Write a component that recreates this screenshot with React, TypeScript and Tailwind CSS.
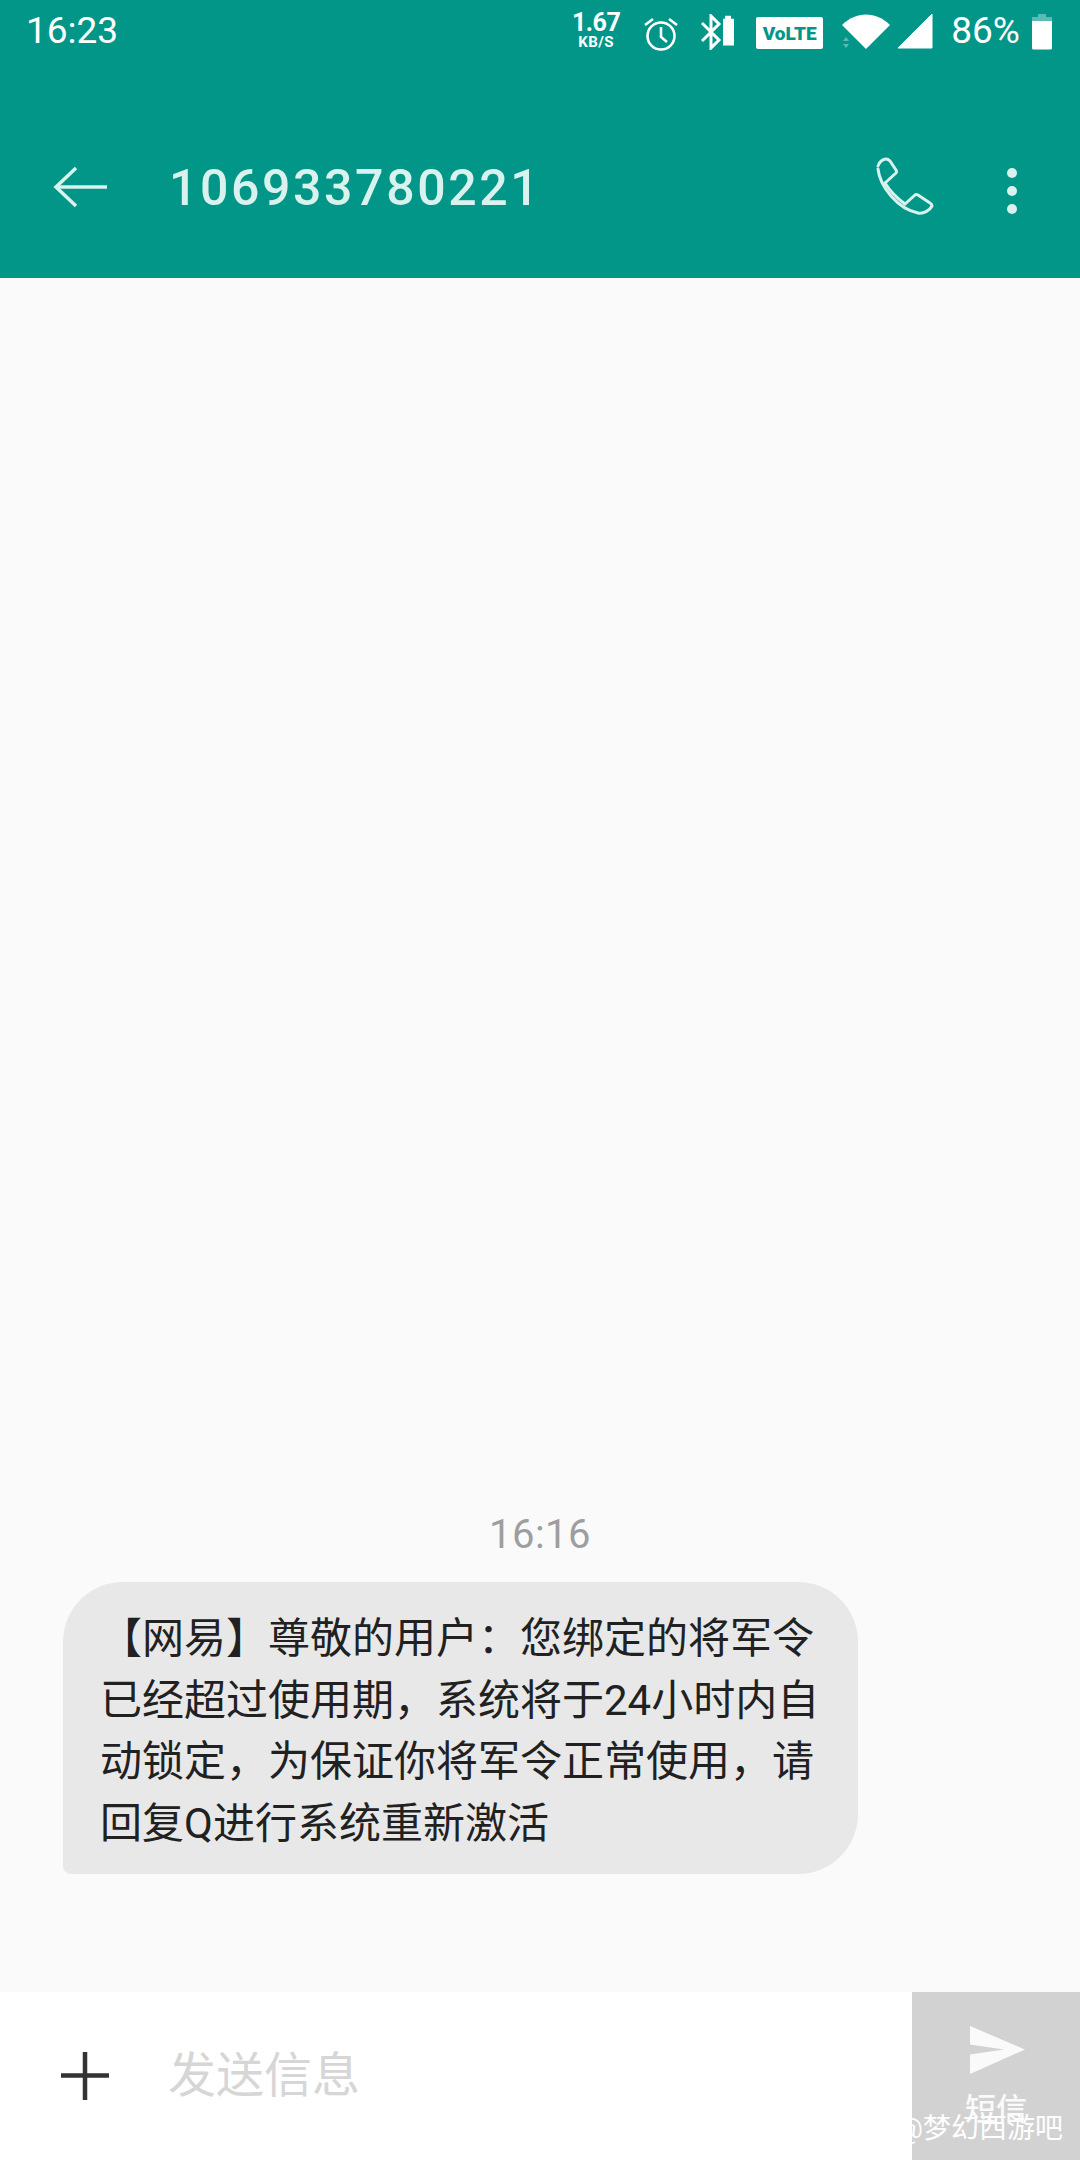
export default function App() {
  return (
    <div className="relative flex h-[2160px] w-[1080px] flex-col overflow-hidden bg-[#fafafa] font-['Roboto','Noto_Sans_CJK_SC',sans-serif]">
      <header className="h-[278px] shrink-0 bg-[#019688]">
        <div className="flex h-[60px] items-start pt-[10px]">
          <span className="ml-[26px] text-[37px] leading-[42px] text-white">16:23</span>
          <div className="ml-[453px] flex w-[50px] flex-col items-center text-white">
            <span className="text-[25px] font-bold leading-[25px] tracking-[-0.5px]">1.67</span>
            <span className="text-[15px] font-bold leading-[15px] tracking-[0.5px]">KB/S</span>
          </div>
          <svg className="ml-[22px] mt-[4px]" width="36" height="38" viewBox="0 0 36 38" fill="none" stroke="#fff" strokeWidth="2.6">
            <circle cx="18" cy="22" r="13.5" />
            <path d="M18 13v10l6 5" />
            <path d="M2 11l8-6M34 11l-8-6" />
          </svg>
          <svg className="ml-[21px] mt-[4px]" width="36" height="36" viewBox="0 0 36 36" fill="none">
            <path d="M2 9l17 17-8 8V2l8 8L2 27" stroke="#fff" strokeWidth="3" />
            <path d="M23 8h2V5h6v3h3v28H23z" fill="#fff" transform="translate(0 -3) scale(1 .96)" />
          </svg>
          <div className="ml-[20px] mt-[7px] flex h-[32px] w-[67px] items-center justify-center rounded-[2px] bg-white text-[19px] font-black leading-none tracking-[0px] text-[#019688]">
            VoLTE
          </div>
          <svg className="ml-[19px] mt-[4px]" width="48" height="36" viewBox="0 0 48 36">
            <path d="M0 11C14 -3 34 -3 48 11L24 35Z" fill="#fff" />
            <path d="M1 27l3-4 3 4zM1 30l3 4 3-4z" fill="#5cbcb2" />
          </svg>
          <svg className="ml-[7px] mt-[4px]" width="36" height="36" viewBox="0 0 36 36">
            <path d="M35 0v34H1z" fill="#fff" stroke="#fff" strokeLinejoin="round" />
          </svg>
          <span className="ml-[18px] text-[37px] leading-[42px] text-white">86%</span>
          <svg className="ml-[12px] mt-[4px]" width="20" height="36" viewBox="0 0 20 36">
            <path d="M6 0h8v3h6v6H0V3h6z" fill="#5cbcb2" />
            <path d="M0 7h20v27a1.500 1.500 0 0 1-1.500 1.500h-17A1.500 1.500 0 0 1 0 34z" fill="#fff" />
          </svg>
        </div>
        <div className="flex h-[218px] items-start">
          <svg className="ml-[52px] mt-[106px]" width="56" height="42" viewBox="0 0 56 42" fill="none" stroke="#d9f2ee" strokeWidth="3.500">
            <path d="M55 21H4" />
            <path d="M24 2L4 21l20 19" />
          </svg>
          <span className="ml-[61px] mt-[97px] text-[50px] font-medium leading-[62px] tracking-[2.6px] text-[#d9f2ee]">106933780221</span>
          <svg className="ml-auto mt-[97px]" width="58" height="58" viewBox="0 0 58 58" fill="none" stroke="#d9f2ee" strokeWidth="3" strokeLinejoin="round" strokeLinecap="round">
            <path d="M2 9C3 5 7 2 10 2c2 0 3 1 4 2l6 9q1 2 0 3L9 26" />
            <path d="M2 12C4 30 22 52 42 56c6 1 12-3 14-7q0-2-2-3L42 38q-2-1-3 0L29 47" />
            <path d="M9 26c5 8 13 16 20 21" />
          </svg>
          <div className="ml-[73px] mr-[63px] mt-[108px] flex flex-col gap-[8px]">
            <div className="h-[10px] w-[10px] rounded-full bg-[#d9f2ee]" />
            <div className="h-[10px] w-[10px] rounded-full bg-[#d9f2ee]" />
            <div className="h-[10px] w-[10px] rounded-full bg-[#d9f2ee]" />
          </div>
        </div>
      </header>

      <main className="flex flex-1 flex-col justify-end pb-[118px]">
        <div className="mb-[25px] text-center text-[40px] leading-[44px] tracking-[0.5px] text-[#9e9e9e]">16:16</div>
        <div className="ml-[63px] w-[795px] rounded-[60px] rounded-bl-[8px] bg-[#e8e8e8] pl-[37px] pb-[20px] pt-[26px] text-[42px] leading-[61.5px] text-[#212121]">
          <div className="whitespace-nowrap">【网易】尊敬的用户：您绑定的将军令</div>
          <div className="whitespace-nowrap">已经超过使用期，系统将于24小时内自</div>
          <div className="whitespace-nowrap">动锁定，为保证你将军令正常使用，请</div>
          <div className="whitespace-nowrap">回复Q进行系统重新激活</div>
        </div>
      </main>

      <footer className="flex h-[168px] shrink-0 bg-white">
        <div className="flex flex-1 items-center">
          <svg className="ml-[61px]" width="48" height="48" viewBox="0 0 48 48" stroke="#333" strokeWidth="4.500">
            <path d="M0 23.500h48M24 0v48" />
          </svg>
          <span className="ml-[59px] text-[48px] leading-[60px] text-[#d6d6d6]">发送信息</span>
        </div>
        <div className="flex w-[168px] flex-col items-center bg-[#d2d2d2] pt-[34px]">
          <svg className="ml-[2px]" width="56" height="48" viewBox="0 0 56 48">
            <path d="M1 0l55 23.500L1 48V28.500l34-5-34-5z" fill="#fafafa" />
          </svg>
          <span className="mt-[18px] text-[31px] font-medium leading-[36px] text-[#fafafa]">短信</span>
        </div>
      </footer>

      <span className="absolute bottom-[14px] right-[17px] text-[28px] leading-[34px] text-white">@梦幻西游吧</span>
    </div>
  );
}
